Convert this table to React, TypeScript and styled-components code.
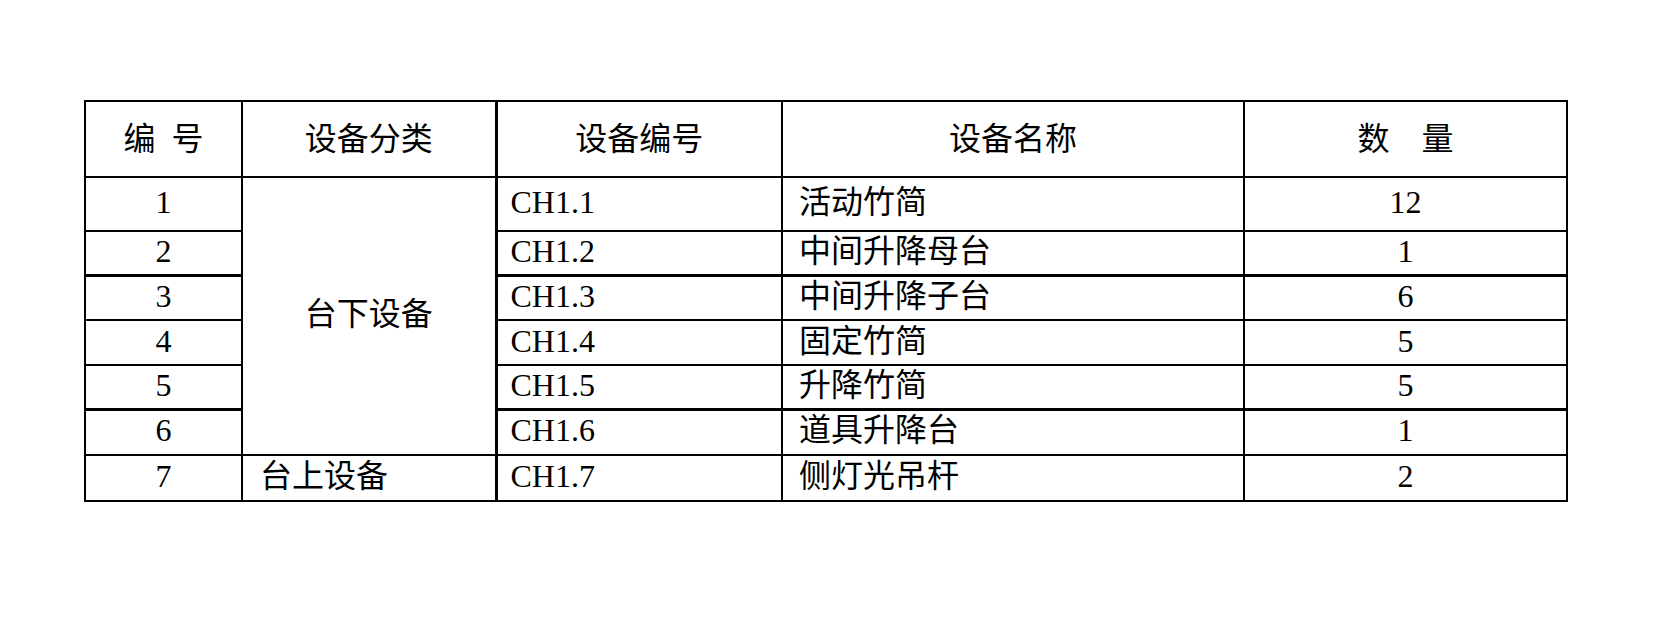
import styled, { createGlobalStyle } from "styled-components";

const GlobalStyle = createGlobalStyle`
  html, body {
    margin: 0;
    padding: 0;
    background: #ffffff;
  }
`

const Page = styled.div`
  width: 1654px;
  height: 630px;
  box-sizing: border-box;
  padding: 100px 0 0 84px;
  background: #ffffff;
`

const Sheet = styled.table`
  border-collapse: collapse;
  table-layout: fixed;
  width: 1484px;
  font-family: "Liberation Serif", "Noto Sans CJK SC", serif;
  font-size: 32px;
  line-height: 1;
  color: #000;
`

const Row = styled.tr<{ $h: number }>`
  height: ${p => p.$h}px;
`

const HeadCell = styled.th`
  border: 2px solid #000;
  font-weight: 400;
  text-align: center;
  vertical-align: middle;
  padding: 0;
  white-space: pre;
`

const Cell = styled.td<{ $align?: "left" | "center"; $pad?: number; $thick?: boolean; $split?: boolean }>`
  border: 2px solid #000;
  border-top-width: ${p => (p.$thick ? 3 : 2)}px;
  border-left-width: ${p => (p.$split ? 3 : 2)}px;
  text-align: ${p => p.$align ?? "center"};
  vertical-align: middle;
  padding: 0 0 4px ${p => p.$pad ?? 0}px;
  white-space: nowrap;
`

const columns = [157, 254, 286, 462, 323]

const rows = [
  { no: "1", code: "CH1.1", name: "活动竹简", qty: "12", h: 54 },
  { no: "2", code: "CH1.2", name: "中间升降母台", qty: "1", h: 44 },
  { no: "3", code: "CH1.3", name: "中间升降子台", qty: "6", h: 45, thick: true },
  { no: "4", code: "CH1.4", name: "固定竹简", qty: "5", h: 45 },
  { no: "5", code: "CH1.5", name: "升降竹简", qty: "5", h: 44 },
  { no: "6", code: "CH1.6", name: "道具升降台", qty: "1", h: 46, thick: true },
]

export default function App() {
  return (<>
    <GlobalStyle />
    <Page>
      <Sheet>
        <colgroup>
          {columns.map((w, i) => <col key={i} style={{ width: w }} />)}
        </colgroup>
        <thead>
          <Row $h={76}>
            <HeadCell>{"编\u2002号"}</HeadCell>
            <HeadCell>设备分类</HeadCell>
            <HeadCell style={{ borderLeftWidth: 3 }}>设备编号</HeadCell>
            <HeadCell>设备名称</HeadCell>
            <HeadCell>{"数\u3000量"}</HeadCell>
          </Row>
        </thead>
        <tbody>
          {rows.map((r, i) => (
            <Row key={r.no} $h={r.h}>
              <Cell $thick={r.thick}>{r.no}</Cell>
              {i === 0 && <Cell rowSpan={6}>台下设备</Cell>}
              <Cell $align="left" $pad={13} $thick={r.thick} $split>{r.code}</Cell>
              <Cell $align="left" $pad={16} $thick={r.thick}>{r.name}</Cell>
              <Cell $thick={r.thick}>{r.qty}</Cell>
            </Row>
          ))}
          <Row $h={46}>
            <Cell>7</Cell>
            <Cell $align="left" $pad={17}>台上设备</Cell>
            <Cell $align="left" $pad={13} $split>CH1.7</Cell>
            <Cell $align="left" $pad={16}>侧灯光吊杆</Cell>
            <Cell>2</Cell>
          </Row>
        </tbody>
      </Sheet>
    </Page>
  </>)
}
